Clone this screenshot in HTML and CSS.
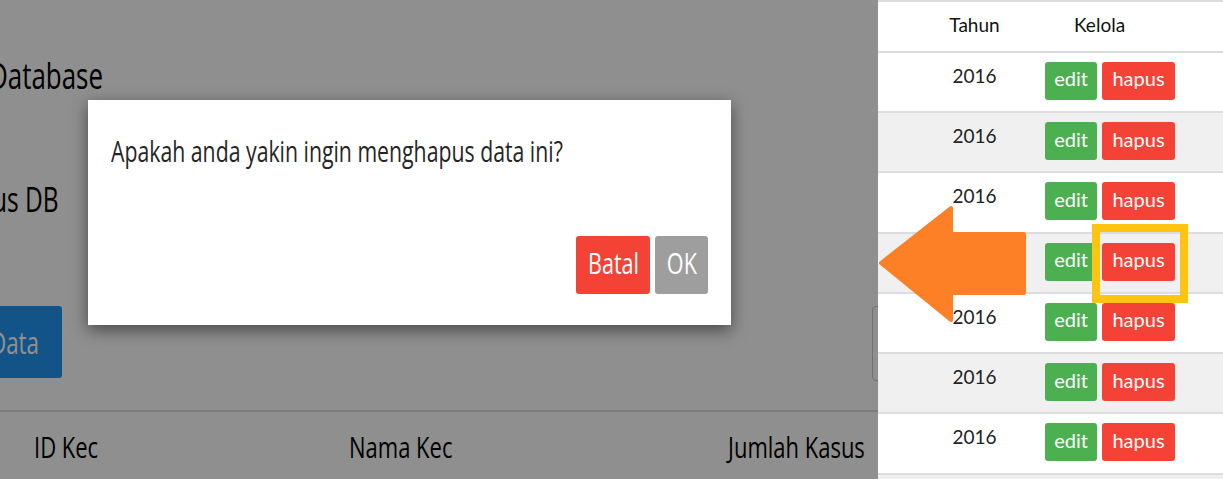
FILE: index.html
```html
<!DOCTYPE html>
<html lang="id">
<head>
<meta charset="utf-8">
<title>Hapus data</title>
<link rel="stylesheet" href="styles.css">
</head>
<body>
<div class="screen">
  <section class="stage">
    <div class="page">
      <h1 class="title"><span class="sx">Database</span></h1>
      <h2 class="subtitle"><span class="sx">us DB</span></h2>
      <div class="toolbar">
        <a class="btn-add"><span class="sx">Data</span></a>
        <div class="search"></div>
      </div>
      <div class="thead">
        <div class="th th-id"><span class="sx sx-w">ID Kec</span></div>
        <div class="th"><span class="sx sx-w">Nama Kec</span></div>
        <div class="th"><span class="sx sx-w">Jumlah Kasus</span></div>
      </div>
    </div>
    <div class="overlay"></div>
    <div class="modal">
      <p class="modal-text"><span class="sx sx-w">Apakah anda yakin ingin menghapus data ini?</span></p>
      <div class="modal-actions">
        <button class="mbtn mbtn-cancel"><span class="sx sx-c">Batal</span></button>
        <button class="mbtn mbtn-ok"><span class="sx sx-c">OK</span></button>
      </div>
    </div>
  </section>

  <section class="grid-panel">
    <div class="g-head">
      <div class="c-year">Tahun</div>
      <div class="c-act-head">Kelola</div>
    </div>
    <div class="g-row"><div class="year">2016</div><div class="actions"><span class="b b-edit">edit</span><span class="b b-del">hapus</span></div></div>
    <div class="g-row"><div class="year">2016</div><div class="actions"><span class="b b-edit">edit</span><span class="b b-del">hapus</span></div></div>
    <div class="g-row"><div class="year">2016</div><div class="actions"><span class="b b-edit">edit</span><span class="b b-del">hapus</span></div></div>
    <div class="g-row"><div class="year">2016</div><div class="actions"><span class="b b-edit">edit</span><span class="b b-del">hapus</span></div></div>
    <div class="g-row"><div class="year">2016</div><div class="actions"><span class="b b-edit">edit</span><span class="b b-del">hapus</span></div></div>
    <div class="g-row"><div class="year">2016</div><div class="actions"><span class="b b-edit">edit</span><span class="b b-del">hapus</span></div></div>
    <div class="g-row"><div class="year">2016</div><div class="actions"><span class="b b-edit">edit</span><span class="b b-del">hapus</span></div></div>
    <div class="g-row"><div class="year">2016</div><div class="actions"><span class="b b-edit">edit</span><span class="b b-del">hapus</span></div></div>
  </section>

  <svg class="arrow" width="155" height="125" viewBox="0 0 155 125" aria-hidden="true">
    <polygon points="5,60 75,5 75,31 148,31 148,90 75,90 75,117" fill="#fd8026" stroke="#fd8026" stroke-width="4" stroke-linejoin="round"/>
  </svg>
  <div class="highlight"></div>
</div>
</body>
</html>
```

FILE: styles.css
```css
* { box-sizing: border-box; }

html, body {
  margin: 0;
  padding: 0;
}

body {
  width: 1223px;
  height: 479px;
  overflow: hidden;
  background: #fff;
}

.screen {
  position: relative;
  display: flex;
  width: 1223px;
  height: 479px;
  overflow: hidden;
}

/* ---------- left: dimmed page with confirm dialog ---------- */
.stage {
  position: relative;
  flex: none;
  width: 878px;
  height: 479px;
  overflow: hidden;
  background: #fff;
  font-family: "Open Sans", "Liberation Sans", sans-serif;
  color: #000;
}

.sx {
  display: inline-block;
  white-space: nowrap;
  transform: scaleX(0.72);
  transform-origin: 0 50%;
}

.sx-w { transform: scaleX(0.733); }

.sx-c { transform-origin: 50% 50%; }

.page { padding-top: 54px; }

.title {
  margin: 0 0 0 -11px;
  font-size: 36px;
  font-weight: 400;
  line-height: 44px;
}

.subtitle {
  margin: 79px 0 0 -8px;
  font-size: 34px;
  font-weight: 400;
  line-height: 44px;
}

.toolbar {
  display: flex;
  align-items: flex-start;
  height: 75px;
  margin-top: 85px;
}

.btn-add {
  display: flex;
  align-items: center;
  flex: none;
  width: 96px;
  height: 72px;
  margin-left: -34px;
  padding-left: 24px;
  background: #2196f3;
  border-radius: 3px;
  color: #fff;
  font-size: 31px;
  line-height: 1;
  text-decoration: none;
}

.search {
  flex: none;
  width: 200px;
  height: 75px;
  margin-left: auto;
  margin-right: -194px;
  border: 1px solid #c8c8c8;
  border-radius: 4px;
  background: #fff;
}

.thead {
  display: grid;
  grid-template-columns: 349px 379px 1fr;
  margin-top: 29px;
  padding-top: 15px;
  border-top: 2px solid #ddd;
  font-size: 30px;
  line-height: 40px;
}

.th-id { padding-left: 34px; }

.overlay {
  position: absolute;
  inset: 0;
  background: rgba(0, 0, 0, 0.44);
}

.modal {
  position: absolute;
  left: 88px;
  top: 100px;
  width: 643px;
  padding: 31px 23px 31px;
  background: #fff;
  box-shadow: 0 5px 15px rgba(0, 0, 0, 0.5);
}

.modal-text {
  margin: 0;
  font-size: 29px;
  line-height: 40px;
  color: #262626;
}

.modal-actions {
  display: flex;
  justify-content: flex-end;
  gap: 5px;
  margin-top: 65px;
}

.mbtn {
  display: flex;
  align-items: center;
  justify-content: center;
  height: 58px;
  padding: 0 0 4px;
  border: 0;
  border-radius: 3px;
  color: #fff;
  font-family: inherit;
  font-size: 30px;
  line-height: 1.2;
}

.mbtn-cancel { width: 74px; background: #f44336; }
.mbtn-ok { width: 53px; background: #9e9e9e; }

/* ---------- right: data table ---------- */
.grid-panel {
  flex: none;
  width: 345px;
  height: 479px;
  background: #fff;
  font-family: Lato, "Open Sans", sans-serif;
  font-size: 19px;
  color: #222;
}

.g-head {
  display: grid;
  grid-template-columns: 167px 1fr;
  height: 52.75px;
  border-top: 2px solid #ddd;
  border-bottom: 2px solid #ddd;
  line-height: 46px;
  color: #111;
}

.c-year {
  padding-left: 26px;
  text-align: center;
}

.c-act-head { padding-left: 29px; }

.g-row {
  display: grid;
  grid-template-columns: 167px 1fr;
  height: 60.25px;
  padding-top: 9px;
  border-bottom: 2px solid #ddd;
  background: #fff;
}

.g-row:nth-child(odd) { background: #f0f0f0; }

.year {
  padding-left: 26px;
  text-align: center;
  line-height: 27px;
}

.actions {
  display: flex;
  gap: 5px;
}

.b {
  display: flex;
  align-items: center;
  justify-content: center;
  height: 38px;
  padding-bottom: 5px;
  border-radius: 3px;
  color: #fff;
  font-size: 20px;
  line-height: 1.2;
}

.b-edit { width: 52px; background: #4caf50; }
.b-del { width: 73px; background: #f44336; }

/* ---------- annotations ---------- */
.arrow {
  position: absolute;
  left: 876px;
  top: 203px;
}

.highlight {
  position: absolute;
  left: 1092px;
  top: 224px;
  width: 96px;
  height: 79px;
  border: 8px solid #fec40f;
}
```
